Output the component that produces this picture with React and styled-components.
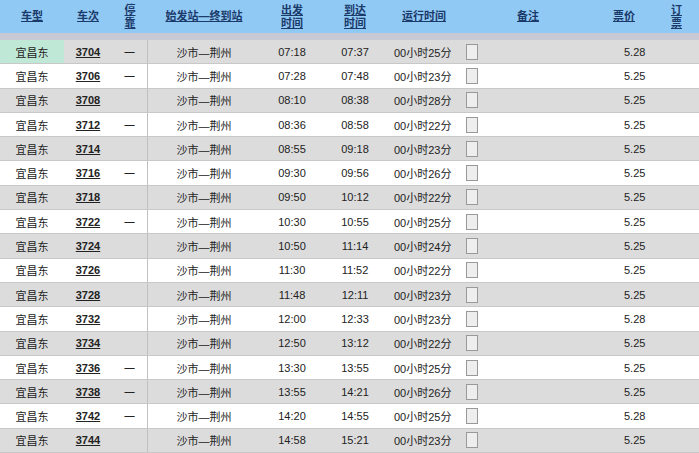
import React from "react";
import styled, { createGlobalStyle } from "styled-components";

const G = createGlobalStyle`
  body { margin: 0; background: #fff; font-family: "Liberation Sans", "Noto Sans CJK SC", sans-serif; }
`;
const cols = "64px 48px 36px 112px 64px 62px 76px 132px 60px 45px";
const Table = styled.div`width: 699px; height: 453px; overflow: hidden;`;
const Head = styled.div`
  display: grid; grid-template-columns: ${cols}; height: 33px; background: #91c9f5;
  border-bottom: 7px solid #c9c9d6;
`;
const H = styled.div`
  display: flex; align-items: center; justify-content: center; text-align: center;
  font-size: 11px; line-height: 13px; font-weight: bold; color: #1a3a6a; text-decoration: underline;
`;
const Row = styled.div`
  display: grid; grid-template-columns: ${cols}; height: 23.3px;
  background: ${p => (p.$alt ? "#fff" : "#dcdcdc")};
  border-bottom: 1px solid #c8c8c8;
`;
const C = styled.div`
  display: flex; align-items: center; justify-content: ${p => p.$left ? "flex-start" : "center"};
  font-size: 11px; color: #222; white-space: nowrap; overflow: hidden;
  padding-left: ${p => p.$pl || 0}px;
  font-weight: ${p => p.$bold ? "bold" : "normal"};
  text-decoration: ${p => p.$u ? "underline" : "none"};
  background: ${p => p.$bg || "transparent"};
  border-right: ${p => p.$br ? "1px solid #c0c0c0" : "none"};
`;
const Box = styled.span`
  display: inline-block; width: 10px; height: 14px; border: 1px solid #999; background: #eee;
`;
const data = [
  ["3704","一","07:18","07:37","25","5.28"],["3706","一","07:28","07:48","23","5.25"],
  ["3708","","08:10","08:38","28","5.25"],["3712","一","08:36","08:58","22","5.25"],
  ["3714","","08:55","09:18","23","5.25"],["3716","一","09:30","09:56","26","5.25"],
  ["3718","","09:50","10:12","22","5.25"],["3722","一","10:30","10:55","25","5.25"],
  ["3724","","10:50","11:14","24","5.25"],["3726","","11:30","11:52","22","5.25"],
  ["3728","","11:48","12:11","23","5.25"],["3732","","12:00","12:33","23","5.28"],
  ["3734","","12:50","13:12","22","5.25"],["3736","一","13:30","13:55","25","5.25"],
  ["3738","一","13:55","14:21","26","5.25"],["3742","一","14:20","14:55","25","5.28"],
  ["3744","","14:58","15:21","23","5.25"],
];
export default function App() {
  return (
    <Table>
      <G />
      <Head>
        <H>车型</H><H>车次</H><H>停<br />靠</H><H>始发站—终到站</H>
        <H>出发<br />时间</H><H>到达<br />时间</H><H>运行时间</H><H>备注</H><H>票价</H><H>订<br />票</H>
      </Head>
      {data.map((d, i) => (
        <Row key={d[0]} $alt={i % 2 === 1}>
          <C $bg={i === 0 ? "#bfe8d6" : undefined}>宜昌东</C>
          <C $bold $u>{d[0]}</C>
          <C $br>{d[1]}</C>
          <C>沙市—荆州</C>
          <C>{d[2]}</C>
          <C>{d[3]}</C>
          <C $left $pl={8}>00小时{d[4]}分</C>
          <C $left $pl={4}><Box /></C>
          <C $left $pl={30}>{d[5]}</C>
          <C />
        </Row>
      ))}
    </Table>
  );
}
